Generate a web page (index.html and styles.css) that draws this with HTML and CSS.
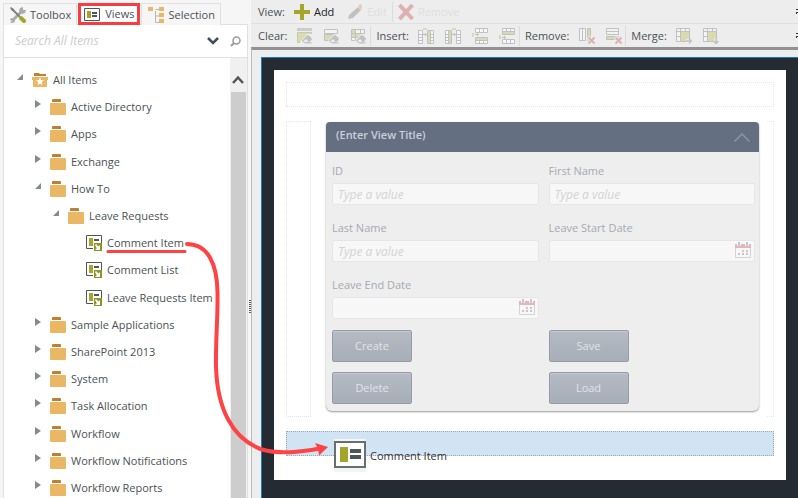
FILE: index.html
```html
<!DOCTYPE html>
<html lang="en">
<head>
<meta charset="utf-8">
<title>View Designer</title>
<link rel="stylesheet" href="styles.css">
</head>
<body>
<svg class="defs" aria-hidden="true">
  <symbol id="folder" viewBox="0 0 16 16"><path fill="#c17f32" d="M2 3V1q0-1 1-1h7q1 0 1 1v2z"/><path fill="#eab765" d="M1 4h14q1 0 1 1v10q0 1-1 1H1q-1 0-1-1V5q0-1 1-1z"/></symbol>
  <symbol id="root" viewBox="0 0 16 16"><path fill="#c17f32" d="M2 4V1h5l1 1h6v2z"/><path fill="#eab765" d="M0 5h16v3h-1v7H1V8H0z"/><path fill="#fff" d="M8 5.500l1.100 2.600 2.900.2-2.200 1.800.7 2.800L8 11.400l-2.500 1.500.7-2.800L4 8.300l2.900-.2z"/></symbol>
  <symbol id="form" viewBox="0 0 16 16"><path fill="#fff" stroke="#4d5658" d="M.5.500h15v12H7M.5.500v13H7"/><path fill="#fff" d="M1 1h14v12H1z"/><path fill="#a3a62b" d="M3 3h4v8H3z"/><path fill="#4d5658" d="M8 4h5v2H8z"/><path fill="#8f9426" d="M8 8h8v8H8z"/><path fill="#fff" d="M9 10l1-1 2.500 2.500L14 10v5H9l1.800-1.700z"/></symbol>
  <symbol id="view" viewBox="0 0 16 13"><path fill="#fff" stroke="#4d5658" d="M.5.500h15v12H.5z"/><path fill="#a3a62b" d="M3 3h4v7H3z"/><path fill="#4d5658" d="M8 4h5v2H8zM8 7h5v2H8z"/></symbol>
  <symbol id="closed" viewBox="0 0 6 8"><path fill="#858b8b" d="M0 0l6 4-6 4z"/></symbol>
  <symbol id="open" viewBox="0 0 6 6"><path fill="#858b8b" d="M6 0v6H0z"/></symbol>
  <symbol id="eraser" viewBox="0 0 16 16"><path fill="#ededed" d="M3 14l7-8h6v10H3z"/><path fill="#bfc2c3" d="M5 12.500l5-5q1-1 2 0l2.500 2.500q1 1 0 2l-3 3H7.500l-2-1.500zm1.500.5l2 1.500H10l1.200-1.200L9 11z"/><path fill="#bfc2c3" d="M8 14.500h7v1H8z"/></symbol>
  <symbol id="calendar" viewBox="0 0 16 16"><path fill="#f7f7f7" stroke="#d0d3d8" d="M.5 3.500h15v12H.5z"/><path fill="#e3b7ba" d="M0 2h16v4H0z"/><path fill="#f7f7f7" d="M2 1h4v3H2zM10 1h4v3h-4z"/><path fill="#c5cad2" d="M3 0h2v4H3zM11 0h2v4h-2zM7 8h2v2H7zM11 8h2v2h-2zM3 11h2v2H3zM11 11h2v2h-2z"/><path fill="#e3b7ba" d="M7 11h2v2H7z"/></symbol>
</svg>

<div class="app">
  <aside class="sidebar">
    <nav class="tabs">
      <button class="tab"><svg width="16" height="16" viewBox="0 0 16 16"><path fill="none" stroke="#a8abab" stroke-width="3" d="M12 4L3 13"/><path fill="#a8abab" d="M10 1l3-1v3h3l-1 3-3 1-3-3zM1 11l3 1 1 3-3 1H0l2-2-2-1z"/><path fill="none" stroke="#7d8284" stroke-width="2" d="M3 3l7 7"/><path fill="#7d8284" d="M0 1l1-1 3 2v2H2z"/><path fill="none" stroke="#a3a62b" stroke-width="4" stroke-linecap="round" d="M11 11l3 3"/></svg>Toolbox</button>
      <button class="tab active"><svg width="16" height="13"><use href="#view"/></svg>Views</button>
      <button class="tab"><svg width="16" height="16" viewBox="0 0 16 16"><path fill="none" stroke="#b5b8b8" d="M7.500 4v11.500H11M7.500 2.500H11M7.500 9H11"/><path fill="#eab765" d="M0 0h5v4H0zM11 0h5v4h-5zM11 6h5v4h-5zM11 12h5v4h-5z"/></svg>Selection</button>
    </nav>
    <div class="panel">
      <div class="search">
        <input type="text" aria-label="Search All Items" placeholder="Search All Items">
        <button class="plain" aria-label="Search options"><svg width="12" height="8" viewBox="0 0 12 8"><path fill="none" stroke="#414c5c" stroke-width="2.500" d="M1 1l5 5 5-5"/></svg></button>
        <button class="plain" aria-label="Search"><svg width="11" height="11" viewBox="0 0 11 11"><circle cx="6.500" cy="4.500" r="3.500" fill="none" stroke="#999" stroke-width="1.500"/><path stroke="#999" stroke-width="2" d="M4 7l-3 3"/></svg></button>
      </div>
      <div class="browse">
        <ul class="tree">
          <li><svg class="mark"><use href="#open"/></svg><svg class="icon"><use href="#root"/></svg>All Items</li>
          <li class="d1"><svg class="mark shut"><use href="#closed"/></svg><svg class="icon"><use href="#folder"/></svg>Active Directory</li>
          <li class="d1"><svg class="mark shut"><use href="#closed"/></svg><svg class="icon"><use href="#folder"/></svg>Apps</li>
          <li class="d1"><svg class="mark shut"><use href="#closed"/></svg><svg class="icon"><use href="#folder"/></svg>Exchange</li>
          <li class="d1"><svg class="mark"><use href="#open"/></svg><svg class="icon"><use href="#folder"/></svg>How To</li>
          <li class="d2"><svg class="mark"><use href="#open"/></svg><svg class="icon"><use href="#folder"/></svg>Leave Requests</li>
          <li class="d3"><svg class="icon"><use href="#form"/></svg>Comment Item</li>
          <li class="d3"><svg class="icon"><use href="#form"/></svg>Comment List</li>
          <li class="d3"><svg class="icon"><use href="#form"/></svg>Leave Requests Item</li>
          <li class="d1"><svg class="mark shut"><use href="#closed"/></svg><svg class="icon"><use href="#folder"/></svg>Sample Applications</li>
          <li class="d1"><svg class="mark shut"><use href="#closed"/></svg><svg class="icon"><use href="#folder"/></svg>SharePoint 2013</li>
          <li class="d1"><svg class="mark shut"><use href="#closed"/></svg><svg class="icon"><use href="#folder"/></svg>System</li>
          <li class="d1"><svg class="mark shut"><use href="#closed"/></svg><svg class="icon"><use href="#folder"/></svg>Task Allocation</li>
          <li class="d1"><svg class="mark shut"><use href="#closed"/></svg><svg class="icon"><use href="#folder"/></svg>Workflow</li>
          <li class="d1"><svg class="mark shut"><use href="#closed"/></svg><svg class="icon"><use href="#folder"/></svg>Workflow Notifications</li>
          <li class="d1"><svg class="mark shut"><use href="#closed"/></svg><svg class="icon"><use href="#folder"/></svg>Workflow Reports</li>
        </ul>
        <div class="scrollbar"><svg width="12" height="9" viewBox="0 0 12 9"><path fill="none" stroke="#555" stroke-width="2.500" d="M1 8l5-5.500L11 8"/></svg><div class="thumb"></div></div>
      </div>
    </div>
  </aside>
  <div class="splitter"><span class="grip"></span></div>

  <main class="designer">
    <div class="toolbar">
      <span class="group">View:</span>
      <button class="tool"><svg width="16" height="16" viewBox="0 0 16 16"><path fill="#a3a62b" d="M6 0h4v6h6v4h-6v6H6v-6H0V6h6z"/></svg>Add</button>
      <button class="tool" disabled><svg width="16" height="16" viewBox="0 0 16 16"><path fill="#bfc2c3" d="M1 15l1-4 9-8 3 3-8 8z"/><path fill="#e6cdb0" d="M11 2l2-2h1l1 2v1l-1 3z"/></svg>Edit</button>
      <i class="sep"></i>
      <button class="tool" disabled><svg width="16" height="16" viewBox="0 0 16 16"><path fill="none" stroke="#dfb0b2" stroke-width="4" d="M1.500 1l13 14M14.500 1l-13 14"/></svg>Remove</button>
      <span class="more"><svg width="2" height="5" viewBox="0 0 2 5"><path fill="#333" d="M0 0h2v1H0zM0 3h2v1H1v1H0z"/></svg></span>
    </div>
    <div class="toolbar second">
      <span class="group">Clear:</span>
      <button class="cell" aria-label="Clear view"><svg class="icon" viewBox="0 0 16 16"><path fill="#ccc" d="M0 0h15v3H0z"/><path fill="#d9dbaf" stroke="#c6c8b0" d="M.5 4.500h14v10H.5z"/><use href="#eraser"/></svg></button>
      <button class="cell" aria-label="Clear row"><svg class="icon" viewBox="0 0 16 16"><path fill="#f3f3f3" stroke="#bfc2c3" d="M.5 1.500h13v4H.5z"/><path fill="#d9dbaf" stroke="#bfc2c3" d="M.5 6.500h13v6H.5z"/><use href="#eraser"/></svg></button>
      <button class="cell" aria-label="Clear cell"><svg class="icon" viewBox="0 0 16 16"><path fill="#f3f3f3" stroke="#bfc2c3" d="M.5 1.500h13v11H.5zM4.500 1v12M9.500 1v12M0 5.500h14M0 9.500h14"/><path fill="#d9dbaf" d="M1 2h3v3H1zM1 6h3v3H1zM5 6h4v3H5z"/><use href="#eraser"/></svg></button>
      <i class="sep"></i>
      <span class="group">Insert:</span>
      <button class="cell" aria-label="Insert column left"><svg class="icon" viewBox="0 0 16 16"><path fill="#f7f7f7" stroke="#bfc2c3" d="M.5 2.500h4v13h-4zM.5 6.500h4M.5 9.500h4M.5 12.500h4M9.500 2.500h6v13h-6zM12 6.500h3M12 9.500h3M12 12.500h3"/><path fill="#d9dbaf" d="M10 3h2v12h-2zM5 0h4v2H5z"/><path stroke="#bfc2c3" d="M12.500 2v13M5 6.500h4M7.500 5v3"/></svg></button>
      <button class="cell" aria-label="Insert column right"><svg class="icon" viewBox="0 0 16 16"><path fill="#f7f7f7" stroke="#bfc2c3" d="M.5 2.500h6v13h-6zM.5 6.500h3M.5 9.500h3M.5 12.500h3M11.500 2.500h4v13h-4zM12 6.500h3M12 9.500h3M12 12.500h3"/><path fill="#d9dbaf" d="M4 3h2v12H4zM7 0h4v2H7z"/><path stroke="#bfc2c3" d="M3.500 2v13M7 6.500h4M9.500 5v3"/></svg></button>
      <button class="cell" aria-label="Insert row above"><svg class="icon" viewBox="0 0 16 16"><path fill="#f7f7f7" stroke="#bfc2c3" d="M3.500.500h12v4h-12zM7.500 0v4M11.500 0v4M3.500 9.500h12v6h-12zM7.500 13v3M11.500 13v3"/><path fill="#d9dbaf" d="M4 10h11v2H4zM0 5h2v4H0z"/><path stroke="#bfc2c3" d="M3 12.500h12M3 6.500h4M5.500 5v3"/></svg></button>
      <button class="cell" aria-label="Insert row below"><svg class="icon" viewBox="0 0 16 16"><path fill="#f7f7f7" stroke="#bfc2c3" d="M3.500.500h12v6h-12zM7.500 0v3M11.500 0v3M3.500 11.500h12v4h-12zM7.500 11v4M11.500 11v4"/><path fill="#d9dbaf" d="M4 4h11v2H4zM0 7h2v4H0z"/><path stroke="#bfc2c3" d="M3 3.500h12M3 9.500h4M5.500 8v3"/></svg></button>
      <i class="sep"></i>
      <span class="group">Remove:</span>
      <button class="cell" aria-label="Remove column"><svg class="icon" viewBox="0 0 16 16"><path fill="#f3f3f3" stroke="#bfc2c3" d="M.5.500h6v12h-6zM3.500 0v12"/><path fill="#d9dbaf" stroke="#bfc2c3" d="M8.500.500h3v12h-3z"/><path stroke="#ededed" stroke-width="4" d="M9 9l7 7M16 9l-7 7"/><path stroke="#dfb0b2" stroke-width="2" d="M9.500 9.500l6 6M15.500 9.500l-6 6"/></svg></button>
      <button class="cell" aria-label="Remove row"><svg class="icon" viewBox="0 0 16 16"><path fill="#f3f3f3" stroke="#bfc2c3" d="M.5.500h12v6H.5zM0 3.500h12"/><path fill="#d9dbaf" stroke="#bfc2c3" d="M.5 8.500h12v3H.5z"/><path stroke="#ededed" stroke-width="4" d="M9 9l7 7M16 9l-7 7"/><path stroke="#dfb0b2" stroke-width="2" d="M9.500 9.500l6 6M15.500 9.500l-6 6"/></svg></button>
      <i class="sep"></i>
      <span class="group">Merge:</span>
      <button class="cell" aria-label="Merge right"><svg class="icon" viewBox="0 0 16 16"><path fill="#f3f3f3" stroke="#bfc2c3" d="M.5.500h13v13H.5zM4.500 0v13M9.500 0v4M0 3.500h14M0 8.500h5"/><path fill="#d9dbaf" d="M5 4h8v9H5z"/><path fill="#ededed" d="M10 11h6v5h-6z"/><path fill="none" stroke="#bfc2c3" stroke-width="1.500" d="M10 13h5M13 10.500l2.500 2.500-2.500 2.500"/></svg></button>
      <button class="cell" aria-label="Merge down"><svg class="icon" viewBox="0 0 16 16"><path fill="#f3f3f3" stroke="#bfc2c3" d="M.5.500h13v13H.5zM4.500 0v13M9.500 0v4M0 3.500h14M0 8.500h5"/><path fill="#d9dbaf" d="M5 4h8v9H5z"/><path fill="#ededed" d="M11 10h5v6h-5z"/><path fill="none" stroke="#bfc2c3" stroke-width="1.500" d="M13 10v5M10.500 13l2.500 2.500 2.500-2.500"/></svg></button>
      <span class="more"><svg width="2" height="5" viewBox="0 0 2 5"><path fill="#333" d="M0 0h2v1H0zM0 3h2v1H1v1H0z"/></svg></span>
    </div>
    <div class="canvas">
      <div class="backdrop">
        <div class="page">
          <div class="slot"></div>
          <div class="row">
            <div class="side"></div>
            <section class="card">
              <header><h2>(Enter View Title)</h2><svg width="16" height="9" viewBox="0 0 16 9"><path fill="none" stroke="#8c96a4" stroke-width="1.500" d="M.5 8.500L8 1l7.500 7.500"/></svg></header>
              <form>
                <div class="field"><label for="id">ID</label><input id="id" type="text" placeholder="Type a value"></div>
                <div class="field"><label for="first">First Name</label><input id="first" type="text" placeholder="Type a value"></div>
                <div class="field"><label for="last">Last Name</label><input id="last" type="text" placeholder="Type a value"></div>
                <div class="field"><label for="start">Leave Start Date</label><div class="date"><input id="start" type="text"><svg class="icon"><use href="#calendar"/></svg></div></div>
                <div class="field"><label for="end">Leave End Date</label><div class="date"><input id="end" type="text"><svg class="icon"><use href="#calendar"/></svg></div></div>
              </form>
              <div class="actions">
                <button>Create</button><button>Save</button>
                <button>Delete</button><button>Load</button>
              </div>
            </section>
            <div class="side edge"></div>
          </div>
          <div class="drop">
            <div class="ghost"><span class="badge"><svg width="32" height="27" viewBox="0 0 32 27"><path fill="#fff" stroke="#68706f" stroke-width="2" d="M1 1h30v25H1z"/><path fill="#a3a62b" d="M6 6h8v15H6z"/><path fill="#4d5658" d="M16 8h11v4H16zM16 14h11v4H16z"/></svg></span>Comment Item</div>
          </div>
        </div>
      </div>
    </div>
  </main>
</div>

<svg class="callout" width="340" height="470" viewBox="0 0 340 470" aria-hidden="true">
  <path fill="none" stroke="#ff4345" stroke-width="3" stroke-linecap="round" d="M108 251.500h77"/>
  <path fill="none" stroke="#ff4345" stroke-width="4" stroke-linecap="round" d="M187 244C208 244 217 264 217.500 292C218 318 215.500 340 216 366C217 408 232 439 262 449.500C280 454.500 300 452 320 448.500"/>
  <path fill="#ff4345" d="M328 447l-13-4 3 5.500 1 7z"/>
</svg>
</body>
</html>
```

FILE: styles.css
```css
* { box-sizing: border-box; }
body {
  margin: 0;
  font: 11px/16px "Open Sans", "Noto Sans", sans-serif;
  color: #4b5254;
  background: #f6f6f6;
}
button, input { font: inherit; color: inherit; margin: 0; }
button { background: none; border: 0; padding: 0; }
svg { display: block; flex: none; }
.defs { position: absolute; width: 0; height: 0; }
.icon { width: 16px; height: 16px; }

.app { display: flex; height: 100vh; overflow: hidden; }

.sidebar { width: 248px; flex: none; display: flex; flex-direction: column; padding: 3px 0 0 3px; }
.tabs { position: relative; z-index: 1; display: flex; gap: 1px; }
.tab {
  display: flex; align-items: center; gap: 4px; height: 22px; padding: 0 5px 0 6px;
  border: 1px solid #e0e0e0; border-bottom: 0; background: #f6f6f6;
}
.tab.active { border: 3px solid #f93c3f; background: #fff; padding: 0 3px; gap: 5px; }
.panel { flex: 1; min-height: 0; display: flex; flex-direction: column; margin-top: -1px; background: #fff; border: 1px solid #e0e0e0; border-bottom: 0; }
.search { display: flex; align-items: center; height: 33px; padding: 0 6px 0 11px; gap: 11px; border-bottom: 1px solid #e0e0e0; }
.search input { flex: 1; min-width: 0; border: 0; padding: 0; background: none; font-size: 12px; }
.search input::placeholder { color: #ccc; font-style: italic; opacity: 1; }
.browse { flex: 1; min-height: 0; display: flex; }
.tree { flex: 1; list-style: none; margin: 0; padding: 8px 0 0 13px; white-space: nowrap; overflow: hidden; }
.tree li { display: flex; align-items: center; height: 27px; }
.tree li:nth-child(5n+4) { margin-top: 1px; }
.tree .mark { width: 6px; height: 6px; margin: 0 9px 5px 0; }
.tree .mark.shut { height: 8px; }
.tree .icon { margin-right: 5px; }
.tree .d1 { padding-left: 18px; }
.tree .d2 { padding-left: 36px; }
.tree .d3 { padding-left: 69px; }
.scrollbar { width: 17px; flex: none; display: flex; flex-direction: column; align-items: center; gap: 8px; padding: 17px 1px 0 0; background: #f0f0f0; }
.thumb { flex: 1; width: 15px; background: #cdcdcd; }

.splitter { width: 3px; flex: none; display: flex; align-items: center; justify-content: center; padding-top: 116px; }
.grip { width: 2px; height: 14px; background: repeating-linear-gradient(#555 0 1px, #f6f6f6 1px 2px); }

.designer { flex: 1; min-width: 0; display: flex; flex-direction: column; background: #ededed; }
.toolbar { display: flex; align-items: center; height: 24px; padding-left: 7px; border-bottom: 1px solid #e0e0e0; }
.toolbar.second { height: 23px; border-bottom: 0; }
.group { margin-right: 4px; }
.tool { display: flex; align-items: center; gap: 4px; height: 22px; padding: 0 5px; color: #222; }
.tool + .tool { margin-left: 3px; }
.tool:disabled { color: #dedede; }
.sep { width: 1px; height: 20px; background: #dcdcdc; }
.toolbar .cell { width: 27px; display: flex; justify-content: center; }
.cell + .sep { margin-left: -2px; }
.sep + .group { margin-left: 5px; }
.more { margin-left: auto; }

.canvas { flex: 1; min-height: 0; display: flex; padding: 7px 0 0 9px; border-top: 3px solid #909090; border-left: 1px solid #bbb; }
.backdrop { flex: 1; padding: 12px; background: #242b33; border: 1px solid #1979ca; border-right: 0; border-bottom: 0; }
.page { display: flex; flex-direction: column; gap: 14px; padding: 12px 12px 24px; background: #fff; }
.slot { height: 25px; border: 1px dotted #e6e6e6; }
.row { display: flex; }
.side { width: 25px; border: 1px dotted #e6e6e6; }
.side.edge { width: 7px; border-left: 0; margin-left: 8px; }
.card { flex: 1; margin: 1px 0 6px 15px; background: #eee; border-radius: 4px 4px 6px 6px; box-shadow: 0 1px 2px #999; color: #a4aab2; }
.card header { display: flex; align-items: center; justify-content: space-between; height: 30px; padding: 0 9px 0 10px; background: #647081; border-radius: 4px 4px 0 0; }
.card h2 { margin: 0 0 4px; font-size: 11px; font-weight: 600; color: #c9cfdb; }
.card form { display: grid; grid-template-columns: 1fr 1fr; gap: 11px 10px; padding: 7px 4px 11px 6px; }
.field label { display: block; line-height: 24px; }
.field input { display: block; width: 100%; height: 22px; padding: 0 5px; border: 1px solid #e6e6e6; border-radius: 2px; background: #f7f7f7; font-size: 12px; }
.field input::placeholder { color: #d2d3d5; font-style: italic; opacity: 1; }
.date { position: relative; }
.date .icon { position: absolute; right: 4px; top: 2px; }
.actions { display: grid; grid-template-columns: 1fr 1fr; gap: 10px; padding: 0 4px 7px 6px; }
.actions button { width: 80px; height: 32px; border: 1px solid #959ca6; border-radius: 2px; background: linear-gradient(#b5bac3, #a7aeb8); box-shadow: inset 0 1px 1px #c5cad2; color: #e0e3e8; }

.drop { position: relative; height: 25px; border: 1px dotted #94a9ba; background: #d1e4f4; }
.ghost { position: absolute; left: 47px; top: 7px; display: flex; align-items: center; gap: 4px; white-space: nowrap; color: #333; }
.badge { padding: 2px 0 4px; background: #f4f4f4; }

.callout { position: absolute; left: 0; top: 0; pointer-events: none; }
```
